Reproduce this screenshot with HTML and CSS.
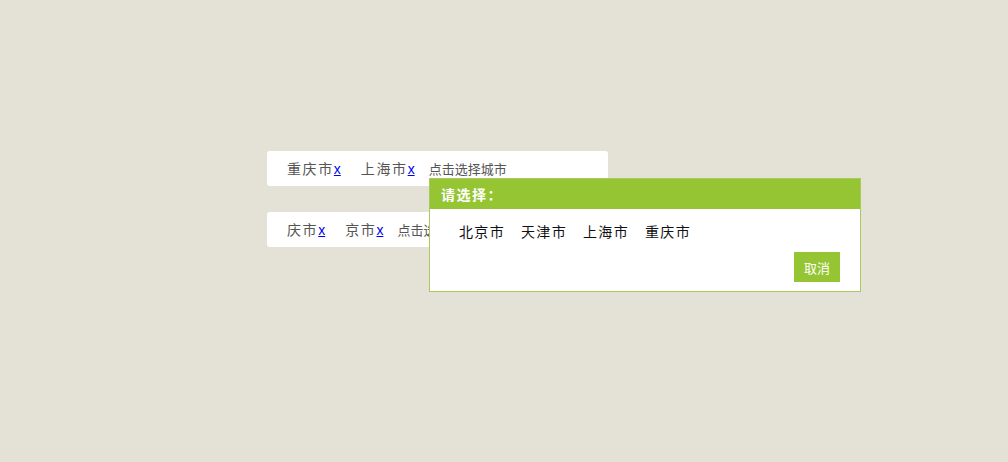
FILE: index.html
```html
<!DOCTYPE html>
<html lang="zh-CN">
<head>
<meta charset="utf-8">
<title>城市选择</title>
<link rel="stylesheet" href="styles.css">
</head>
<body>
<div class="page">
  <div class="picker">
    <span class="tag">重庆市<a href="#" class="del">x</a></span>
    <span class="tag">上海市<a href="#" class="del">x</a></span>
    <span class="hint">点击选择城市</span>
  </div>
  <div class="picker">
    <span class="tag">庆市<a href="#" class="del">x</a></span>
    <span class="tag">京市<a href="#" class="del">x</a></span>
    <span class="hint">点击选择城市</span>
  </div>

  <div class="dialog">
    <div class="dialog-head">请选择：</div>
    <div class="dialog-body">
      <div class="options">
        <span class="opt">北京市</span>
        <span class="opt">天津市</span>
        <span class="opt">上海市</span>
        <span class="opt">重庆市</span>
      </div>
      <div class="actions">
        <button class="btn-cancel">取消</button>
      </div>
    </div>
  </div>
</div>
</body>
</html>
```
FILE: styles.css
```css
html, body {
  margin: 0;
  padding: 0;
}
body {
  background: #e4e1d6;
  font-family: "Noto Sans CJK SC", "Liberation Sans", sans-serif;
  width: 1008px;
  height: 462px;
  overflow: hidden;
}
.page {
  position: relative;
  padding: 151px 0 0 267px;
  display: flex;
  flex-direction: column;
  gap: 26px;
}
.picker {
  width: 341px;
  height: 35px;
  box-sizing: border-box;
  background: #fff;
  border-radius: 3px;
  padding-left: 14px;
  display: flex;
  align-items: center;
  color: #555;
}
.tag {
  margin-left: 6px;
  margin-right: 14px;
  font-size: 14px;
  letter-spacing: 1.6px;
  line-height: 20px;
}
.del {
  color: #0000ee;
  text-decoration: underline;
  font-family: "Liberation Sans", sans-serif;
  font-size: 14px;
  letter-spacing: 0;
}
.hint {
  font-size: 13px;
  line-height: 20px;
  color: #555;
}
.dialog {
  position: absolute;
  left: 429px;
  top: 178px;
  width: 432px;
  height: 114px;
  box-sizing: border-box;
  border: 1px solid #a7c960;
  background: #fff;
  display: flex;
  flex-direction: column;
}
.dialog-head {
  height: 30px;
  background: #95c532;
  color: #fff;
  font-size: 14px;
  font-weight: bold;
  letter-spacing: 1.5px;
  line-height: 30px;
  padding-left: 11px;
}
.dialog-body {
  flex: 1;
  display: flex;
  flex-direction: column;
  padding: 12px 20px 9px 29px;
}
.options {
  display: flex;
  gap: 16px;
}
.opt {
  font-size: 14px;
  letter-spacing: 1.33px;
  line-height: 20px;
  color: #111;
}
.actions {
  margin-top: auto;
  display: flex;
  justify-content: flex-end;
}
.btn-cancel {
  width: 46px;
  height: 30px;
  border: none;
  background: #95c532;
  color: #fff;
  font-family: "Noto Sans CJK SC", sans-serif;
  font-size: 13px;
  padding: 0;
  cursor: pointer;
}
```
